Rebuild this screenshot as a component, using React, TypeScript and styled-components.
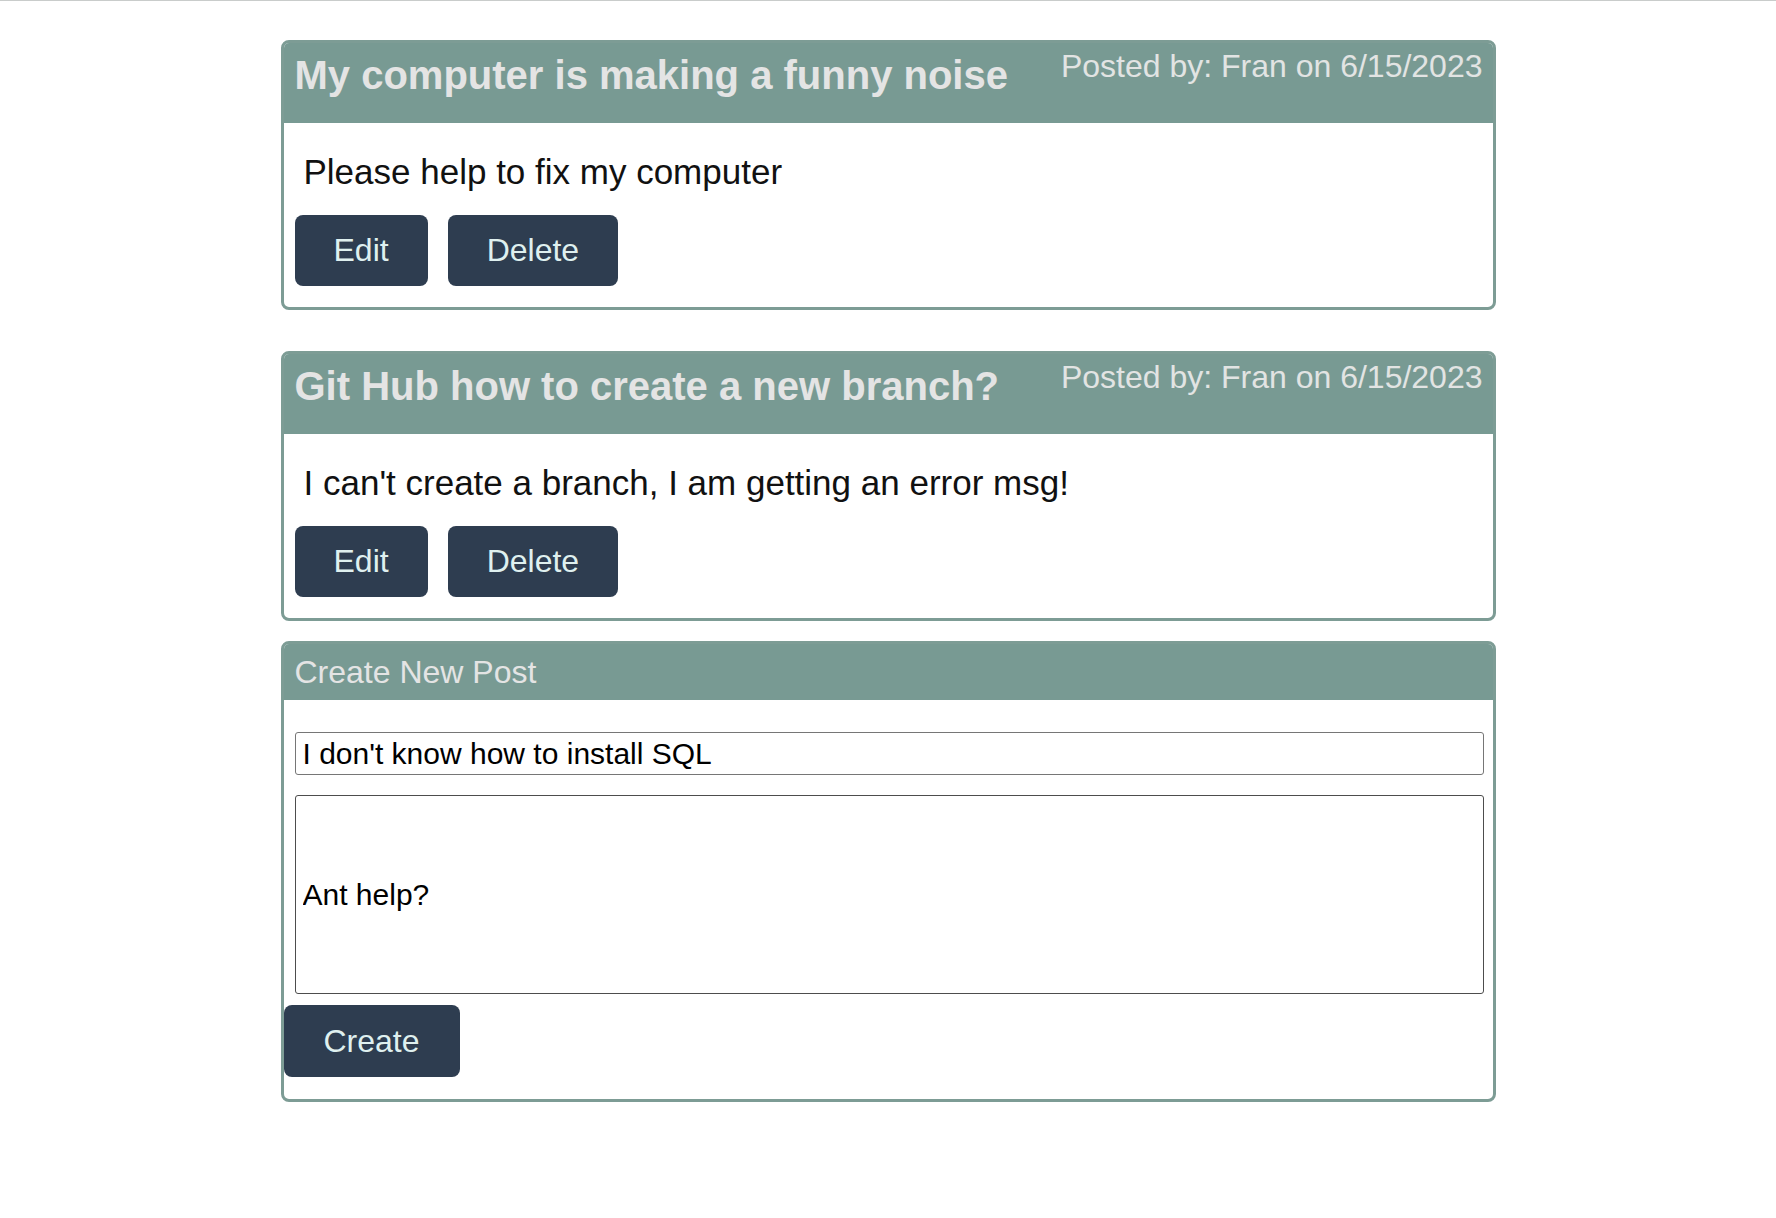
import React from "react";
import styled, { createGlobalStyle } from "styled-components";

const GlobalStyle = createGlobalStyle`
  html, body {
    margin: 0;
    padding: 0;
    background: #ffffff;
    font-family: "Liberation Sans", Arial, sans-serif;
  }
`;

const TopRule = styled.div`
  height: 1px;
  background: #c9cccb;
`;

const Main = styled.main`
  display: flex;
  flex-direction: column;
  align-items: center;
  padding-top: 39px;
`;

const PostList = styled.div`
  display: flex;
  flex-direction: column;
  gap: 41px;
`;

const Card = styled.section`
  box-sizing: border-box;
  width: 1215px;
  border: 3px solid #7d9c95;
  border-radius: 8px;
  overflow: hidden;
  background: #ffffff;
`;

const FormCard = styled(Card)`
  margin-top: 20px;
`;

const CardHeader = styled.header<{ $height: number }>`
  box-sizing: border-box;
  height: ${(p) => p.$height}px;
  background: #789a93;
  display: flex;
  justify-content: space-between;
  align-items: flex-start;
  padding: 0 10px 0 11px;
  color: #e4e4e4;
`;

const Title = styled.h2`
  margin: 10px 0 0;
  font-size: 40px;
  font-weight: 700;
  line-height: normal;
`;

const Meta = styled.span`
  margin-top: 5px;
  font-size: 32px;
  line-height: normal;
  color: #e2e4e3;
`;

const FormTitle = styled.h3`
  margin: 10px 0 0;
  font-size: 32px;
  font-weight: 400;
  line-height: normal;
`;

const CardBody = styled.div`
  padding: 29px 11px 21px;
`;

const BodyText = styled.p`
  margin: 0 0 24px;
  padding-left: 9px;
  font-size: 35px;
  line-height: 39px;
  color: #111111;
`;

const Actions = styled.div`
  display: flex;
  gap: 20px;
`;

const Button = styled.button`
  box-sizing: border-box;
  height: 71px;
  padding: 0 39px;
  border: none;
  border-radius: 8px;
  background: #2e3d50;
  color: #dff0ef;
  font-family: "Liberation Sans", Arial, sans-serif;
  font-size: 32px;
  cursor: pointer;
`;

const Form = styled.form`
  display: flex;
  flex-direction: column;
  align-items: flex-start;
  padding: 32px 0 22px;
`;

const TextField = styled.input<{ $tall?: boolean }>`
  box-sizing: border-box;
  width: 1189px;
  margin-left: 11px;
  height: ${(p) => (p.$tall ? 199 : 43)}px;
  margin-bottom: ${(p) => (p.$tall ? 11 : 20)}px;
  padding: 0 7px;
  border: 1px solid ${(p) => (p.$tall ? "#4d4d4d" : "#767676")};
  border-radius: 3px;
  font-family: "Liberation Sans", Arial, sans-serif;
  font-size: 30px;
  color: #000000;
  background: #ffffff;
  outline: none;
`;

const CreateButton = styled(Button)`
  height: 72px;
  padding: 0 40px;
`;

type Post = { id: number; title: string; author: string; date: string; body: string };

const posts: Post[] = [
  {
    id: 1,
    title: "My computer is making a funny noise",
    author: "Fran",
    date: "6/15/2023",
    body: "Please help to fix my computer",
  },
  {
    id: 2,
    title: "Git Hub how to create a new branch?",
    author: "Fran",
    date: "6/15/2023",
    body: "I can't create a branch, I am getting an error msg!",
  },
];

function PostCard({ post }: { post: Post }) {
  return (
    <Card>
      <CardHeader $height={80}>
        <Title>{post.title}</Title>
        <Meta>
          Posted by: {post.author} on {post.date}
        </Meta>
      </CardHeader>
      <CardBody>
        <BodyText>{post.body}</BodyText>
        <Actions>
          <Button type="button">Edit</Button>
          <Button type="button">Delete</Button>
        </Actions>
      </CardBody>
    </Card>
  );
}

export default function App() {
  return (
    <>
      <GlobalStyle />
      <TopRule />
      <Main>
        <PostList>
          {posts.map((p) => (
            <PostCard key={p.id} post={p} />
          ))}
        </PostList>
        <FormCard>
          <CardHeader $height={56}>
            <FormTitle>Create New Post</FormTitle>
          </CardHeader>
          <Form onSubmit={(e) => e.preventDefault()}>
            <TextField type="text" defaultValue="I don't know how to install SQL" />
            <TextField $tall type="text" defaultValue="Ant help?" />
            <CreateButton type="submit">Create</CreateButton>
          </Form>
        </FormCard>
      </Main>
    </>
  );
}
